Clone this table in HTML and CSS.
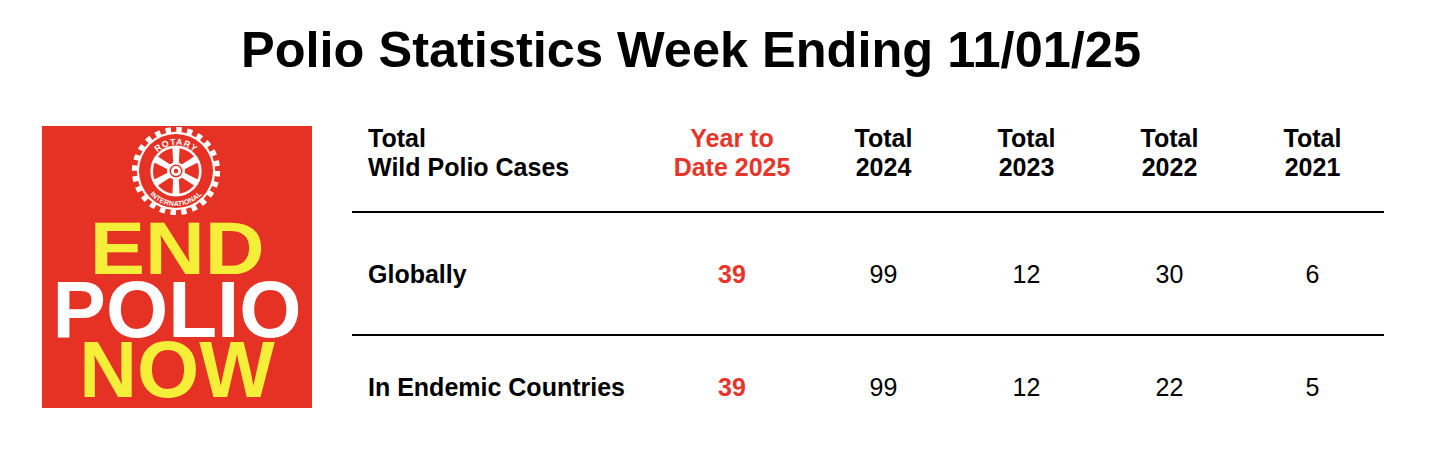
FILE: index.html
```html
<!DOCTYPE html>
<html lang="en">
<head>
<meta charset="utf-8">
<title>Polio Statistics</title>
<link rel="stylesheet" href="styles.css">
</head>
<body>
<h1 class="title">Polio Statistics Week Ending 11/01/25</h1>
<div class="content">
  <div class="logo">
    <svg class="wheel" viewBox="0 0 90 90" width="90" height="90" aria-hidden="true">
      <defs>
        <path id="arcTop" d="M 18.8 45 A 26.2 26.2 0 0 1 71.2 45"/>
        <path id="arcBottom" d="M 10 45 A 35 35 0 0 0 80 45"/>
      </defs>
      <circle cx="45" cy="45" r="41.4" fill="none" stroke="#fff" stroke-width="5.4" stroke-dasharray="5.4 5.44"/>
      <circle cx="45" cy="45" r="39.2" fill="#fff"/>
      <circle cx="45" cy="45" r="37" fill="#e63224"/>
      <text class="ring-text" font-size="8.8" letter-spacing="0.8"><textPath href="#arcTop" startOffset="50%" text-anchor="middle">ROTARY</textPath></text>
      <text class="ring-text" font-size="7" letter-spacing="0.15"><textPath href="#arcBottom" startOffset="50%" text-anchor="middle">INTERNATIONAL</textPath></text>
      <circle cx="45" cy="45" r="24.3" fill="none" stroke="#fff" stroke-width="2.6"/>
      <g fill="#fff">
        <polygon points="42.6,45 47.4,45 48.6,21.5 41.4,21.5" transform="rotate(0 45 45)"/>
        <polygon points="42.6,45 47.4,45 48.6,21.5 41.4,21.5" transform="rotate(60 45 45)"/>
        <polygon points="42.6,45 47.4,45 48.6,21.5 41.4,21.5" transform="rotate(120 45 45)"/>
        <polygon points="42.6,45 47.4,45 48.6,21.5 41.4,21.5" transform="rotate(180 45 45)"/>
        <polygon points="42.6,45 47.4,45 48.6,21.5 41.4,21.5" transform="rotate(240 45 45)"/>
        <polygon points="42.6,45 47.4,45 48.6,21.5 41.4,21.5" transform="rotate(300 45 45)"/>
      </g>
      <circle cx="45" cy="45" r="9" fill="#fff"/>
      <circle cx="45" cy="45" r="5.8" fill="none" stroke="#e63224" stroke-width="1.4"/>
      <circle cx="45" cy="45" r="2.2" fill="#e63224"/>
    </svg>
    <div class="logo-text">
      <span class="line end yellow">END</span>
      <span class="line white">POLIO</span>
      <span class="line yellow">NOW</span>
    </div>
  </div>
  <div class="stats">
    <div class="row head">
      <div class="cell label">Total<br>Wild Polio Cases</div>
      <div class="cell red">Year to<br>Date 2025</div>
      <div class="cell">Total<br>2024</div>
      <div class="cell">Total<br>2023</div>
      <div class="cell">Total<br>2022</div>
      <div class="cell">Total<br>2021</div>
    </div>
    <div class="row body first">
      <div class="cell label">Globally</div>
      <div class="cell red strong">39</div>
      <div class="cell">99</div>
      <div class="cell">12</div>
      <div class="cell">30</div>
      <div class="cell">6</div>
    </div>
    <div class="row body last">
      <div class="cell label">In Endemic Countries</div>
      <div class="cell red strong">39</div>
      <div class="cell">99</div>
      <div class="cell">12</div>
      <div class="cell">22</div>
      <div class="cell">5</div>
    </div>
  </div>
</div>
</body>
</html>
```

FILE: styles.css
```css
html, body {
  margin: 0;
  padding: 0;
  background: #fff;
  color: #000;
  font-family: "Liberation Sans", Arial, sans-serif;
}

.title {
  margin: 0;
  padding: 20px 54px 0 0;
  font-size: 50.5px;
  line-height: 60px;
  font-weight: bold;
  text-align: center;
}

.content {
  display: flex;
  align-items: flex-start;
  margin-top: 44px;
  padding-left: 42px;
}

.logo {
  width: 270px;
  height: 282px;
  margin-top: 2px;
  background: #e63224;
  display: flex;
  flex-direction: column;
  align-items: center;
  flex: none;
}

.wheel {
  display: block;
  margin-left: -2px;
}

.ring-text {
  fill: #fff;
  font-family: "Liberation Sans", Arial, sans-serif;
  font-weight: bold;
}

.logo-text {
  margin-top: 4px;
  display: flex;
  flex-direction: column;
  align-items: center;
  font-weight: bold;
}

.logo-text .line {
  display: block;
  height: 60px;
  font-size: 80px;
  line-height: 60px;
}

.logo-text .end {
  font-size: 74px;
  line-height: 58px;
  height: 58px;
  margin-bottom: 2px;
  transform: scaleX(1.12);
}

.yellow { color: #f6ef3a; }
.white { color: #fff; }

.stats {
  margin-left: 40px;
  width: 1032px;
}

.row {
  display: grid;
  grid-template-columns: 300px 160px repeat(4, 143px);
  align-items: start;
  font-size: 25px;
  line-height: 29px;
}

.head {
  font-weight: bold;
  padding-bottom: 29px;
  border-bottom: 2px solid #000;
}

.body.first {
  padding: 47px 0 45px;
  border-bottom: 2px solid #000;
}

.body.last {
  padding: 37px 0;
}

.cell {
  text-align: center;
}

.cell.label {
  text-align: left;
  padding-left: 16px;
  font-weight: bold;
}

.red { color: #e8352a; }
.strong { font-weight: bold; }
```
